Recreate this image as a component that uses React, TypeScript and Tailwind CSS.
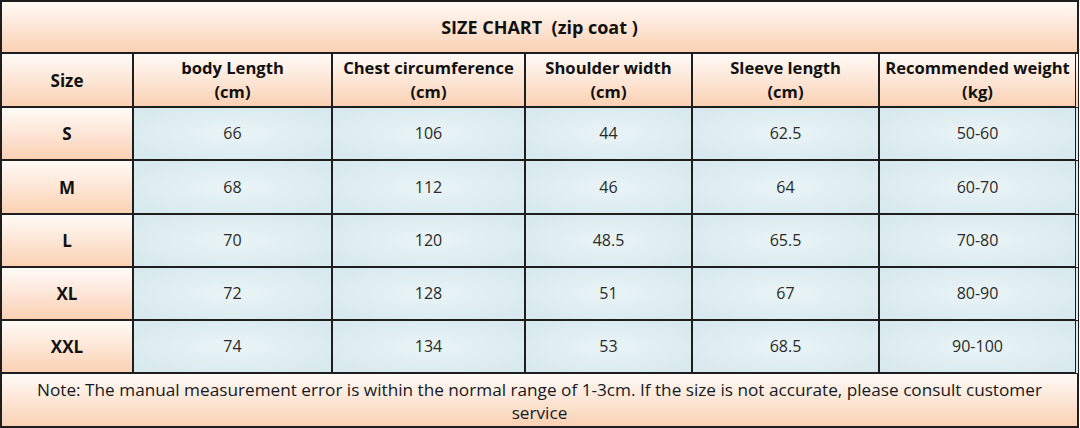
import React from "react";

const peach = "bg-[linear-gradient(to_bottom,#fffaf6_0%,#fde6d6_50%,#fbd1b3_100%)]";
const blue = "bg-[radial-gradient(ellipse_at_center,#eaf4f6_0%,#d5e8ed_100%)]";

const headers: [string, string][] = [
  ["body Length", "(cm)"],
  ["Chest circumference", "(cm)"],
  ["Shoulder width", "(cm)"],
  ["Sleeve length", "(cm)"],
  ["Recommended weight", "(kg)"],
];

const rows: string[][] = [
  ["S", "66", "106", "44", "62.5", "50-60"],
  ["M", "68", "112", "46", "64", "60-70"],
  ["L", "70", "120", "48.5", "65.5", "70-80"],
  ["XL", "72", "128", "51", "67", "80-90"],
  ["XXL", "74", "134", "53", "68.5", "90-100"],
];

const rowH = ["h-[53px]", "h-[54px]", "h-[53px]", "h-[53px]", "h-[53px]"];

function cellBorder(i: number) {
  return i === 4
    ? "border-r-[4px] border-double border-b-2 border-b-solid"
    : "border-r-2 border-b-2";
}

export default function App() {
  return (
    <div className="w-[1080px] h-[428px] bg-white" style={{ fontFamily: '"Open Sans", "Noto Sans", sans-serif' }}>
      <div className="w-[1079px] border-l-2 border-t-2 border-[#1e1e1e] grid grid-cols-[132px_199px_193px_167px_187px_199px] text-[16px] leading-[23px]">
        <div className={`col-span-6 h-[52px] border-r-2 border-b-2 border-[#1e1e1e] ${peach} flex items-center justify-center font-bold text-[#111] text-[18px] whitespace-pre`}>
          {"SIZE CHART  (zip coat )"}
        </div>

        <div className={`h-[54px] border-r-2 border-b-2 border-[#1e1e1e] ${peach} flex items-center justify-center font-bold text-[#111] text-[17px]`}>
          Size
        </div>
        {headers.map((h, i) => (
          <div
            key={i}
            className={`h-[54px] ${cellBorder(i)} border-[#1e1e1e] ${peach} flex flex-col items-center justify-center font-bold text-[#111] text-[16.6px] leading-[24px] whitespace-nowrap`}
          >
            <span>{h[0]}</span>
            <span>{h[1]}</span>
          </div>
        ))}

        {rows.map((r, ri) => (
          <React.Fragment key={ri}>
            <div className={`${rowH[ri]} border-r-2 border-b-2 border-[#1e1e1e] ${peach} flex items-center justify-center font-bold text-[#111] text-[17px]`}>
              {r[0]}
            </div>
            {r.slice(1).map((v, ci) => (
              <div
                key={ci}
                className={`${rowH[ri]} ${cellBorder(ci)} border-[#1e1e1e] ${blue} flex items-center justify-center text-[#2a2a2a]`}
              >
                {v}
              </div>
            ))}
          </React.Fragment>
        ))}

        <div className={`col-span-6 h-[54px] border-r-2 border-b-2 border-[#1e1e1e] ${peach} px-3 pt-[4px] text-center text-[#141a24] text-[17.2px]`}>
          Note: The manual measurement error is within the normal range of 1-3cm. If the size is not accurate, please consult customer service
        </div>
      </div>
    </div>
  );
}
